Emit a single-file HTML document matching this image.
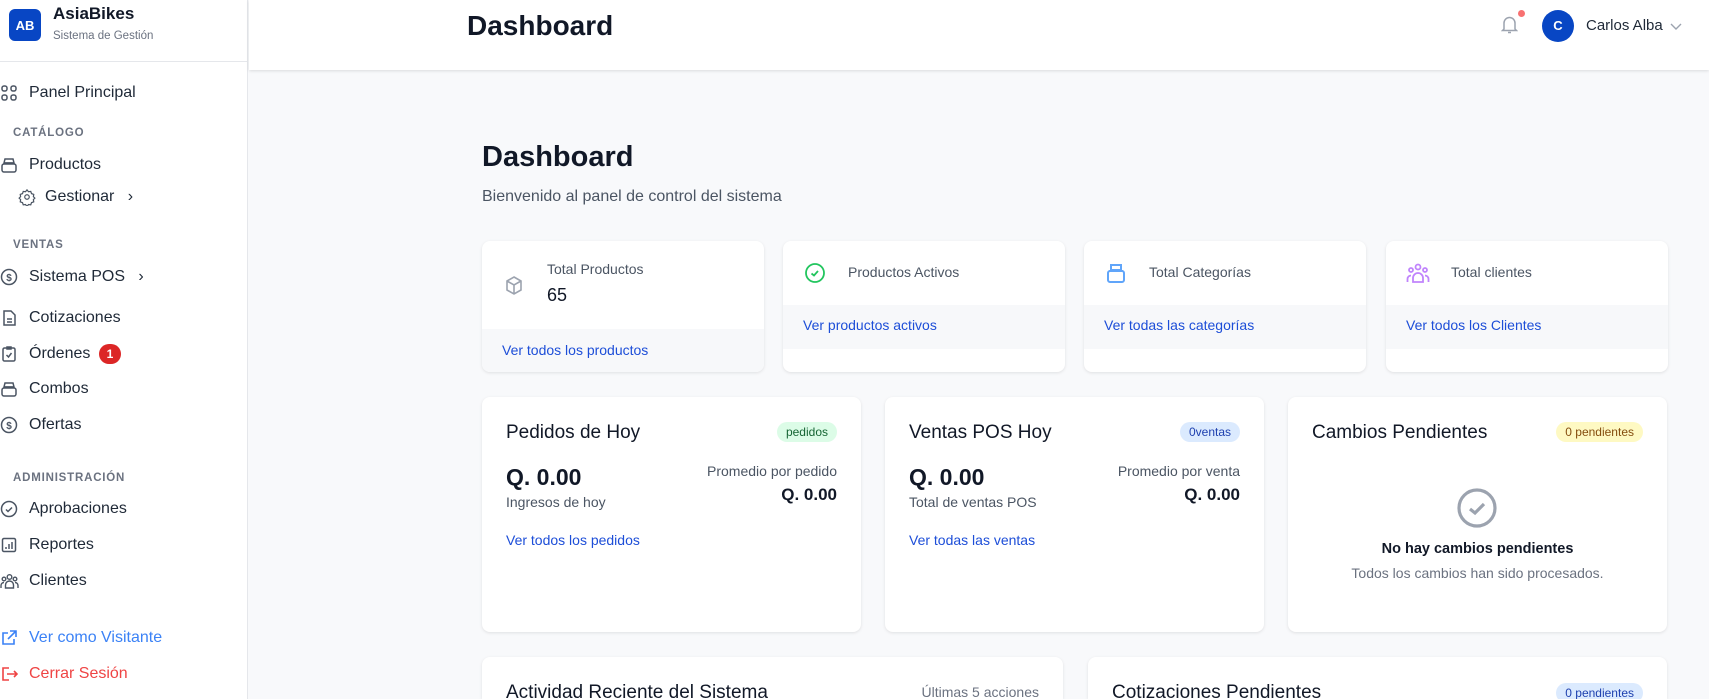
<!DOCTYPE html>
<html style="width:1709px;height:699px;overflow:hidden"><head><meta charset="utf-8"><style>
*{box-sizing:border-box;margin:0;padding:0}
body{width:1709px;height:699px;overflow:hidden;background:#f8f9fb;font-family:"Liberation Sans","DejaVu Sans",sans-serif;color:#111827;position:relative}
.abs{position:absolute}
#side{position:absolute;left:0;top:0;width:248px;height:699px;background:#fff;border-right:1px solid #e5e7eb}
.logo{left:9px;top:9px;width:32px;height:32px;background:#0846c4;border-radius:6px;color:#fff;font-weight:bold;font-size:13px;display:flex;align-items:center;justify-content:center}
.nav{position:absolute;left:29px;font-size:16px;color:#1f2937;transform:translateY(-50%);white-space:nowrap}
.ico{position:absolute;left:0;transform:translateY(-50%)}
.sec{position:absolute;left:13px;font-size:11.5px;font-weight:bold;color:#6b7280;letter-spacing:.8px;transform:translateY(-50%)}
#hdr{position:absolute;left:249px;top:0;right:0;height:70px;background:#fff;box-shadow:0 1px 3px rgba(0,0,0,.12)}
.card{position:absolute;background:#fff;border-radius:8px;box-shadow:0 1px 3px rgba(0,0,0,.1);overflow:hidden}
.foot{position:absolute;left:0;right:0;background:#f7f8fa}
.lnk{color:#1d4ed8;font-size:14px;position:absolute;white-space:nowrap}
.t{position:absolute;white-space:nowrap}
.badge{position:absolute;font-size:12px;padding:0 9px;height:20px;line-height:20px;border-radius:10px}
</style></head><body>
<div id="side">
 <div class="abs logo">AB</div>
 <div class="t" style="left:53px;top:4px;font-size:17px;font-weight:bold">AsiaBikes</div>
 <div class="t" style="left:53px;top:30px;font-size:11.5px;color:#6b7280">Sistema de Gestión</div>
 <div class="abs" style="left:0;top:61px;width:248px;border-top:1px solid #e5e7eb"></div>

 <svg class="ico" style="top:93px" width="18" height="18" viewBox="0 0 18 18" fill="none" stroke="#4b5563" stroke-width="1.5"><rect x="2" y="2" width="5" height="5" rx="2"/><rect x="11" y="2" width="5" height="5" rx="2"/><rect x="2" y="11" width="5" height="5" rx="2"/><rect x="11" y="11" width="5" height="5" rx="2"/></svg>
 <div class="nav" style="top:93px">Panel Principal</div>
 <div class="sec" style="top:133px">CATÁLOGO</div>
 <svg class="ico" style="top:165px" width="18" height="18" viewBox="0 0 18 18" fill="none" stroke="#4b5563" stroke-width="1.5"><path d="M5 3h8l1 4H4z"/><rect x="2" y="8" width="14" height="8" rx="2"/><path d="M4 7h10"/></svg>
 <div class="nav" style="top:165px">Productos</div>
 <svg class="ico" style="top:197px;left:18px" width="18" height="18" viewBox="0 0 24 24" fill="none" stroke="#4b5563" stroke-width="1.6"><circle cx="12" cy="12" r="3"/><path d="M12 2.5l2 2.5 3-.5 1 3 3 1-.5 3 2 2-2 2 .5 3-3 1-1 3-3-.5-2 2.5-2-2.5-3 .5-1-3-3-1 .5-3-2-2 2-2-.5-3 3-1 1-3 3 .5z"/></svg>
 <div class="nav" style="top:197px;left:45px">Gestionar&nbsp;&nbsp; ›</div>
 <div class="sec" style="top:245px">VENTAS</div>
 <svg class="ico" style="top:277px" width="18" height="18" viewBox="0 0 18 18" fill="none" stroke="#4b5563" stroke-width="1.5"><circle cx="9" cy="9" r="7.5"/><text x="9" y="13" font-size="10" text-anchor="middle" fill="#4b5563" stroke="none" font-weight="bold">$</text></svg>
 <div class="nav" style="top:277px">Sistema POS&nbsp;&nbsp; ›</div>
 <svg class="ico" style="top:318px" width="18" height="18" viewBox="0 0 18 18" fill="none" stroke="#4b5563" stroke-width="1.5"><path d="M4 2h7l4 4v10H4z"/><path d="M7 10h5M7 13h5"/></svg>
 <div class="nav" style="top:318px">Cotizaciones</div>
 <svg class="ico" style="top:354px" width="18" height="18" viewBox="0 0 18 18" fill="none" stroke="#4b5563" stroke-width="1.5"><rect x="3" y="3" width="12" height="13" rx="1.5"/><path d="M7 2h4v2H7zM6.5 10l2 2 3-4"/></svg>
 <div class="nav" style="top:354px">Órdenes</div>
 <div class="abs" style="left:99px;top:344px;width:22px;height:20px;border-radius:10px;background:#dc2626;color:#fff;font-size:12px;font-weight:bold;text-align:center;line-height:20px">1</div>
 <svg class="ico" style="top:389px" width="18" height="18" viewBox="0 0 18 18" fill="none" stroke="#4b5563" stroke-width="1.5"><path d="M5 3h8l1 4H4z"/><rect x="2" y="8" width="14" height="8" rx="2"/><path d="M4 7h10"/></svg>
 <div class="nav" style="top:389px">Combos</div>
 <svg class="ico" style="top:425px" width="18" height="18" viewBox="0 0 18 18" fill="none" stroke="#4b5563" stroke-width="1.5"><circle cx="9" cy="9" r="7.5"/><text x="9" y="13" font-size="10" text-anchor="middle" fill="#4b5563" stroke="none" font-weight="bold">$</text></svg>
 <div class="nav" style="top:425px">Ofertas</div>
 <div class="sec" style="top:478px">ADMINISTRACIÓN</div>
 <svg class="ico" style="top:509px" width="18" height="18" viewBox="0 0 18 18" fill="none" stroke="#4b5563" stroke-width="1.5"><circle cx="9" cy="9" r="7.5"/><path d="M6 9.5l2 2 4-4"/></svg>
 <div class="nav" style="top:509px">Aprobaciones</div>
 <svg class="ico" style="top:545px" width="18" height="18" viewBox="0 0 18 18" fill="none" stroke="#4b5563" stroke-width="1.5"><rect x="2.5" y="2.5" width="13" height="13" rx="1.5"/><path d="M6 13v-2M9 13V8M12 13V6"/></svg>
 <div class="nav" style="top:545px">Reportes</div>
 <svg class="ico" style="top:581px" width="19" height="18" viewBox="0 0 19 18" fill="none" stroke="#4b5563" stroke-width="1.4"><circle cx="9.5" cy="5" r="2.3"/><circle cx="4" cy="7" r="1.8"/><circle cx="15" cy="7" r="1.8"/><path d="M5.5 16v-3a4 4 0 018 0v3zM1 16v-2.5a3 3 0 013-3M18 16v-2.5a3 3 0 00-3-3"/></svg>
 <div class="nav" style="top:581px">Clientes</div>
 <svg class="ico" style="top:638px" width="18" height="18" viewBox="0 0 18 18" fill="none" stroke="#3b82f6" stroke-width="1.6"><path d="M8 4H3v11h11v-5M10 2h6v6M16 2L8 10"/></svg>
 <div class="nav" style="top:638px;color:#3b82f6">Ver como Visitante</div>
 <svg class="ico" style="top:674px" width="18" height="18" viewBox="0 0 18 18" fill="none" stroke="#ef4444" stroke-width="1.6"><path d="M9 3H3v12h6M7 9h10M14 6l3 3-3 3"/></svg>
 <div class="nav" style="top:674px;color:#ef4444">Cerrar Sesión</div>
</div>

<div id="hdr">
 <div class="t" style="left:218px;top:10px;font-size:28px;font-weight:bold">Dashboard</div>
 <svg class="abs" style="left:1252px;top:15px" width="17" height="19" viewBox="0 0 17 19" fill="none" stroke="#9ca3af" stroke-width="1.5"><path d="M3 14V8a5.5 5.5 0 0111 0v6l1.5 1.5h-14zM7 17.5h3"/></svg>
 <div class="abs" style="left:1269px;top:10px;width:7px;height:7px;border-radius:50%;background:#f87171"></div>
 <div class="abs" style="left:1293px;top:10px;width:32px;height:32px;border-radius:50%;background:#0846c4;color:#fff;font-size:13px;font-weight:bold;text-align:center;line-height:32px">C</div>
 <div class="t" style="left:1337px;top:17px;font-size:15px;color:#1f2937">Carlos Alba</div>
 <svg class="abs" style="left:1421px;top:23px" width="12" height="8" viewBox="0 0 12 8" fill="none" stroke="#9ca3af" stroke-width="1.4"><path d="M1 1l5 5 5-5"/></svg>
</div>

<div class="t" style="left:482px;top:141px;font-size:29px;font-weight:bold">Dashboard</div>
<div class="t" style="left:482px;top:188px;font-size:16px;color:#4b5563">Bienvenido al panel de control del sistema</div>

<div class="card" style="left:482px;top:241px;width:282px;height:131px">
 <div class="foot" style="top:88px;bottom:0"></div>
 <svg class="abs" style="left:22px;top:34px" width="20" height="22" viewBox="0 0 20 22" fill="none" stroke="#9ca3af" stroke-width="1.6"><path d="M10 2l7 4v9l-7 4-7-4V6zM3 6l7 4 7-4M10 10v9"/></svg>
 <div class="t" style="left:65px;top:20px;font-size:14px;color:#4b5563">Total Productos</div>
 <div class="t" style="left:65px;top:44px;font-size:18px">65</div>
 <div class="lnk" style="left:20px;top:101px">Ver todos los productos</div>
</div>
<div class="card" style="left:783px;top:241px;width:282px;height:131px">
 <div class="foot" style="top:64px;height:44px"></div>
 <svg class="abs" style="left:21px;top:21px" width="22" height="22" viewBox="0 0 22 22" fill="none" stroke="#22c55e" stroke-width="1.8"><circle cx="11" cy="11" r="9"/><path d="M7.5 11.5l2.5 2 4-4.5"/></svg>
 <div class="t" style="left:65px;top:23px;font-size:14px;color:#4b5563">Productos Activos</div>
 <div class="lnk" style="left:20px;top:76px">Ver productos activos</div>
</div>
<div class="card" style="left:1084px;top:241px;width:282px;height:131px">
 <div class="foot" style="top:64px;height:44px"></div>
 <svg class="abs" style="left:22px;top:21px" width="20" height="22" viewBox="0 0 20 22" fill="none" stroke="#60a5fa" stroke-width="2"><path d="M5 3h10v5H5z"/><rect x="2" y="9" width="16" height="11" rx="2"/><path d="M3 9h14"/></svg>
 <div class="t" style="left:65px;top:23px;font-size:14px;color:#4b5563">Total Categorías</div>
 <div class="lnk" style="left:20px;top:76px">Ver todas las categorías</div>
</div>
<div class="card" style="left:1386px;top:241px;width:282px;height:131px">
 <div class="foot" style="top:64px;height:44px"></div>
 <svg class="abs" style="left:20px;top:21px" width="24" height="22" viewBox="0 0 24 22" fill="none" stroke="#c084fc" stroke-width="1.8"><circle cx="12" cy="5" r="2.5"/><circle cx="5" cy="8" r="2"/><circle cx="19" cy="8" r="2"/><path d="M7 20v-4a5 5 0 0110 0v4zM1.5 20v-3a3.5 3.5 0 013.5-3.5M22.5 20v-3a3.5 3.5 0 00-3.5-3.5"/></svg>
 <div class="t" style="left:65px;top:23px;font-size:14px;color:#4b5563">Total clientes</div>
 <div class="lnk" style="left:20px;top:76px">Ver todos los Clientes</div>
</div>

<div class="card" style="left:482px;top:397px;width:379px;height:235px">
 <div class="t" style="left:24px;top:25px;font-size:19px">Pedidos de Hoy</div>
 <div class="badge" style="right:24px;top:25px;background:#dcfce7;color:#166534">pedidos</div>
 <div class="t" style="left:24px;top:67px;font-size:23px;font-weight:bold">Q. 0.00</div>
 <div class="t" style="left:24px;top:97px;font-size:14px;color:#4b5563">Ingresos de hoy</div>
 <div class="t" style="right:24px;top:66px;font-size:14px;color:#4b5563">Promedio por pedido</div>
 <div class="t" style="right:24px;top:88px;font-size:17px;font-weight:bold">Q. 0.00</div>
 <div class="lnk" style="left:24px;top:135px">Ver todos los pedidos</div>
</div>
<div class="card" style="left:885px;top:397px;width:379px;height:235px">
 <div class="t" style="left:24px;top:25px;font-size:19px">Ventas POS Hoy</div>
 <div class="badge" style="right:24px;top:25px;background:#dbeafe;color:#1e40af">0ventas</div>
 <div class="t" style="left:24px;top:67px;font-size:23px;font-weight:bold">Q. 0.00</div>
 <div class="t" style="left:24px;top:97px;font-size:14px;color:#4b5563">Total de ventas POS</div>
 <div class="t" style="right:24px;top:66px;font-size:14px;color:#4b5563">Promedio por venta</div>
 <div class="t" style="right:24px;top:88px;font-size:17px;font-weight:bold">Q. 0.00</div>
 <div class="lnk" style="left:24px;top:135px">Ver todas las ventas</div>
</div>
<div class="card" style="left:1288px;top:397px;width:379px;height:235px">
 <div class="t" style="left:24px;top:25px;font-size:19px">Cambios Pendientes</div>
 <div class="badge" style="right:24px;top:25px;background:#fef9c3;color:#854d0e">0 pendientes</div>
 <svg class="abs" style="left:168px;top:90px" width="42" height="42" viewBox="0 0 42 42" fill="none" stroke="#9ca3af" stroke-width="3.2"><circle cx="21" cy="21" r="18"/><path d="M14 22l5 4 9-9"/></svg>
 <div class="t" style="left:0;right:0;top:144px;text-align:center;font-size:14.5px;font-weight:bold">No hay cambios pendientes</div>
 <div class="t" style="left:0;right:0;top:168px;text-align:center;font-size:14px;color:#6b7280">Todos los cambios han sido procesados.</div>
</div>

<div class="card" style="left:482px;top:657px;width:581px;height:42px;border-radius:8px 8px 0 0">
 <div class="t" style="left:24px;top:25px;font-size:19px">Actividad Reciente del Sistema</div>
 <div class="t" style="right:24px;top:27px;font-size:14px;color:#6b7280">Últimas 5 acciones</div>
</div>
<div class="card" style="left:1088px;top:657px;width:579px;height:42px;border-radius:8px 8px 0 0">
 <div class="t" style="left:24px;top:25px;font-size:19px">Cotizaciones Pendientes</div>
 <div class="badge" style="right:24px;top:26px;background:#dbeafe;color:#1e40af">0 pendientes</div>
</div>
</body></html>
